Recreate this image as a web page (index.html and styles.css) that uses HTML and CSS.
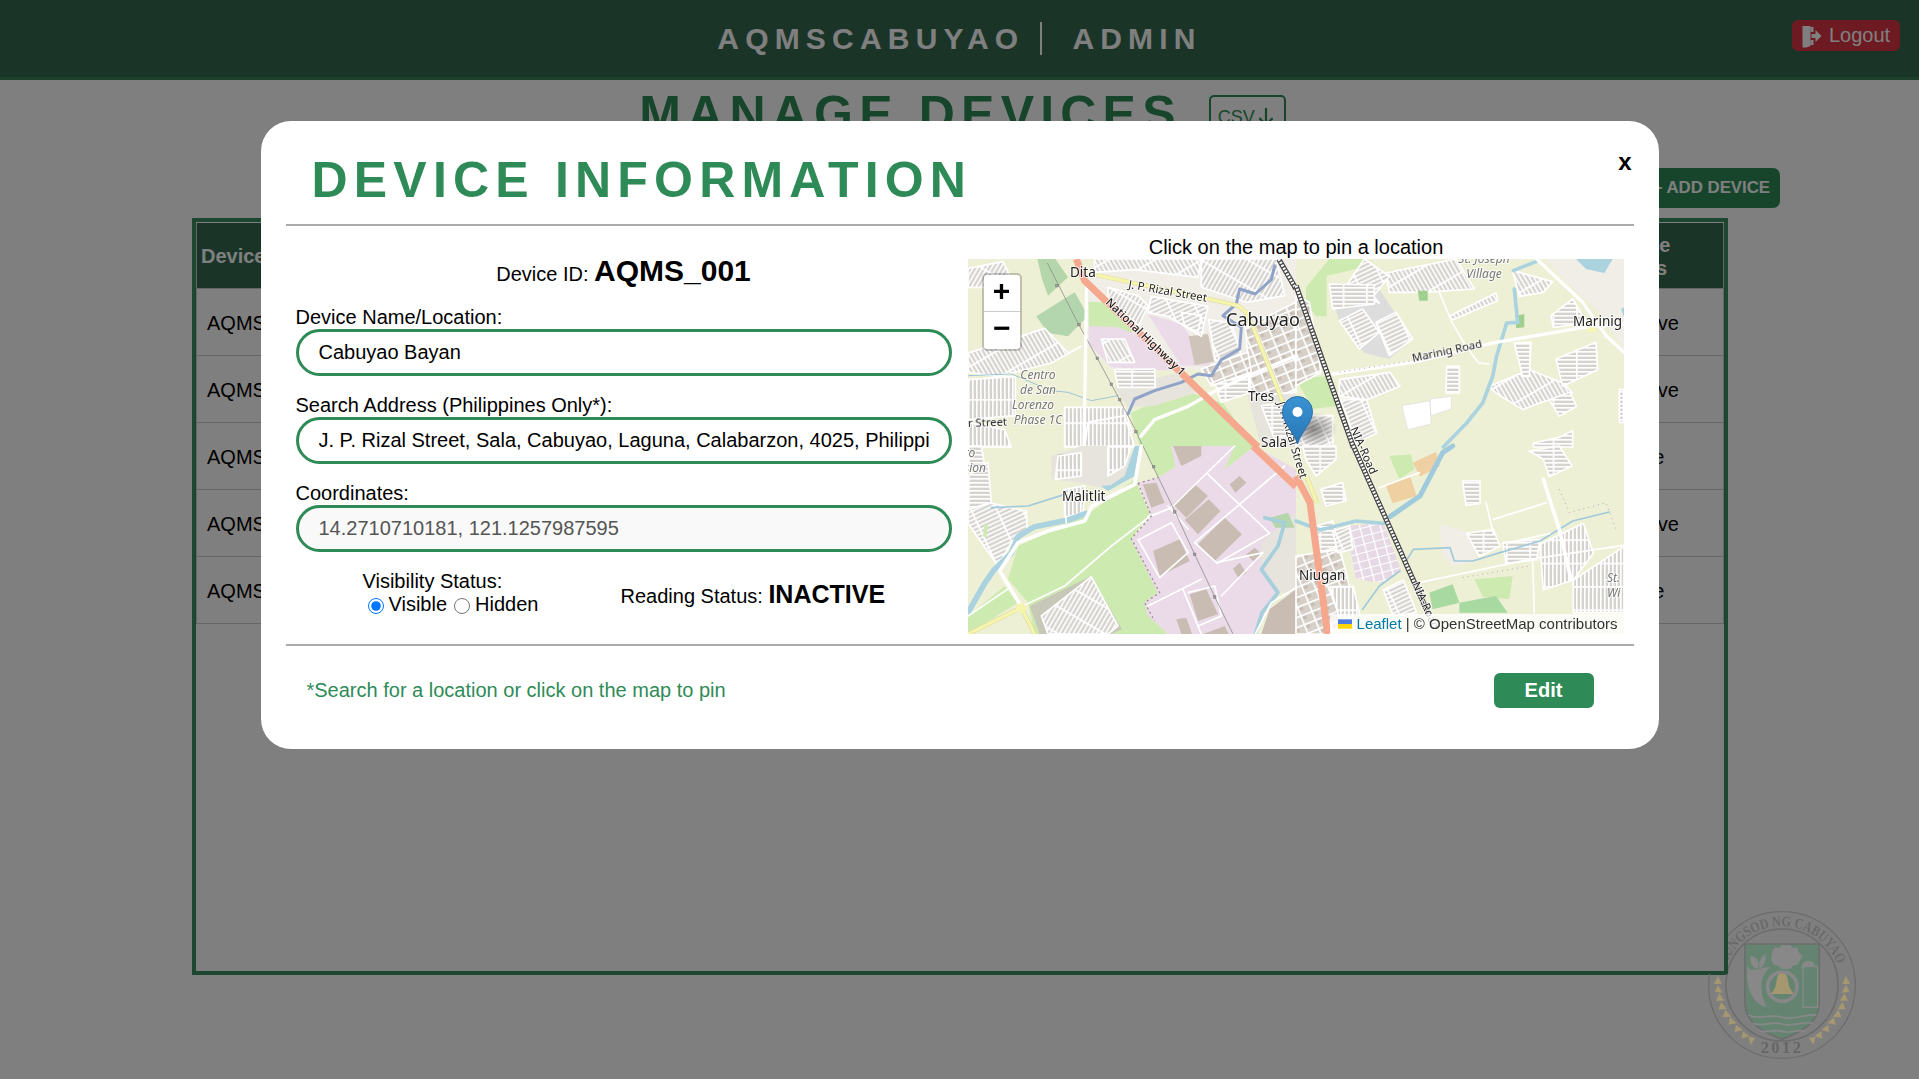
FILE: index.html
```html
<!DOCTYPE html>
<html lang="en">
<head>
<meta charset="utf-8">
<title>Manage Devices</title>
<link rel="stylesheet" href="styles.css">
</head>
<body>
<header class="topbar">
  <div class="brand"><span>AQMSCABUYAO</span><i class="brand-sep"></i><span>ADMIN</span></div>
  <button class="logout" type="button">
    <svg class="logout-icon" viewBox="0 0 20 24"><path d="M1 2h8v20l-4 1.500H1z"/><path d="M9 3h3v5h-3zM9 16h3v5h-3z"/><path d="M10 10h4V6l6 6-6 6v-4h-4z"/></svg>
    Logout
  </button>
</header>
<main class="page">
  <div class="title-row">
    <h1 class="page-title">MANAGE DEVICES</h1>
    <span class="csv">CSV<svg class="csv-icon" viewBox="0 0 16 18"><path d="M8 1v15M2 10l6 6 6-6"/></svg></span>
  </div>
  <div class="tool-row"><button class="add" type="button">+ ADD DEVICE</button></div>
  <section class="table-box">
    <div class="t-row t-head"><span>Device ID</span><span>Device Name</span><span>Location</span><span>Device Status</span></div>
    <div class="t-row"><span>AQMS_001</span><span>Cabuyao Bayan</span><span>Sala</span><span>Inactive</span></div>
    <div class="t-row"><span>AQMS_002</span><span>Marinig</span><span>Marinig</span><span>Inactive</span></div>
    <div class="t-row"><span>AQMS_003</span><span>Niugan</span><span>Niugan</span><span>Active</span></div>
    <div class="t-row"><span>AQMS_004</span><span>Malitlit</span><span>Malitlit</span><span>Inactive</span></div>
    <div class="t-row"><span>AQMS_005</span><span>Dita</span><span>Dita</span><span>Active</span></div>
  </section>
</main>

<div class="overlay">
  <div class="modal">
    <div class="modal-head">
      <h2 class="modal-title">DEVICE INFORMATION</h2>
      <span class="close">x</span>
    </div>
    <hr class="rule">
    <div class="modal-body">
      <form class="form-col">
        <div class="device-id">Device ID: <b>AQMS_001</b></div>
        <label class="field-label">Device Name/Location:</label>
        <input class="field" type="text" value="Cabuyao Bayan">
        <label class="field-label">Search Address (Philippines Only*):</label>
        <input class="field" type="text" value="J. P. Rizal Street, Sala, Cabuyao, Laguna, Calabarzon, 4025, Philippines">
        <label class="field-label">Coordinates:</label>
        <input class="field field-off" type="text" value="14.2710710181, 121.1257987595" disabled>
        <div class="status-row">
          <div class="visibility">
            <div>Visibility Status:</div>
            <div class="radios">
              <input class="radio" type="radio" name="v" checked><span>Visible</span>
              <input class="radio" type="radio" name="v"><span>Hidden</span>
            </div>
          </div>
          <div class="reading">Reading Status: <b>INACTIVE</b></div>
        </div>
      </form>
      <div class="map-col">
        <div class="map-caption">Click on the map to pin a location</div>
        <div class="map">
          <svg class="map-svg" viewBox="0 0 656 375" xmlns="http://www.w3.org/2000/svg">
            <defs>
              <pattern id="p0" width="70" height="12" patternUnits="userSpaceOnUse"><rect width="70" height="12" fill="#d6d3cf"/><rect width="70" height="5" fill="#fff"/><rect width="5" height="12" fill="#fff"/></pattern>
              <pattern id="p90" width="12" height="70" patternUnits="userSpaceOnUse"><rect width="12" height="70" fill="#d6d3cf"/><rect width="5" height="70" fill="#fff"/><rect width="12" height="5" fill="#fff"/></pattern>
              <pattern id="p30" width="12" height="70" patternUnits="userSpaceOnUse" patternTransform="rotate(30)"><rect width="12" height="70" fill="#d6d3cf"/><rect width="5" height="70" fill="#fff"/><rect width="12" height="5" fill="#fff"/></pattern>
              <pattern id="p150" width="12" height="70" patternUnits="userSpaceOnUse" patternTransform="rotate(-30)"><rect width="12" height="70" fill="#d6d3cf"/><rect width="5" height="70" fill="#fff"/><rect width="12" height="5" fill="#fff"/></pattern>
              <pattern id="p65" width="12" height="70" patternUnits="userSpaceOnUse" patternTransform="rotate(65)"><rect width="12" height="70" fill="#d6d3cf"/><rect width="5" height="70" fill="#fff"/><rect width="12" height="5" fill="#fff"/></pattern>
              <pattern id="grid" width="30" height="24" patternUnits="userSpaceOnUse" patternTransform="rotate(-15)"><rect width="30" height="24" fill="#e6d8e4"/><rect width="4" height="24" fill="#fff"/><rect width="30" height="3" fill="#fff"/></pattern>
              <pattern id="town" width="36" height="28" patternUnits="userSpaceOnUse" patternTransform="rotate(-22)"><rect width="36" height="28" fill="#d6d0c9"/><rect x="6" y="6" width="12" height="10" fill="#c7bdb3"/><rect width="5" height="28" fill="#fff"/><rect width="36" height="5" fill="#fff"/></pattern>
              <linearGradient id="pinfill" x1="0" y1="0" x2="0" y2="1"><stop offset="0" stop-color="#3b93d3"/><stop offset="1" stop-color="#2777b5"/></linearGradient>
              <radialGradient id="pinshadow"><stop offset="0" stop-color="#000" stop-opacity=".42"/><stop offset="1" stop-color="#000" stop-opacity="0"/></radialGradient>
            </defs>
            <rect class="m-land" width="656" height="375"/>
            <g class="m-geo">
              <!-- north-west quadrant, 3x units -->
              <g transform="scale(.33333)">
                <polygon class="m-tan" points="380,0 984,0 984,360 820,340 640,330 430,330 360,260 360,60"/>
                <polygon class="m-green2" points="208,0 262,0 300,55 240,110 222,60"/>
                <polygon class="m-green3" points="205,172 320,100 360,170 300,232 240,222"/>
                <polygon class="m-green" points="362,128 420,130 505,215 440,240 362,200"/>
                <polygon class="m-pink" points="362,200 450,205 520,235 640,320 620,335 430,325 362,255"/>
                <polygon class="m-pink" points="540,165 640,195 730,320 640,320"/>
                <polygon class="m-bldg" points="662,232 720,225 738,308 680,318"/>
                <polygon class="m-green" points="488,462 640,392 765,432 860,564 515,564"/>
                <polygon class="m-tan2" points="440,385 640,340 690,400 560,440 480,445"/>
                <polygon class="m-tan2" points="820,340 984,360 984,564 880,564"/>
                <g class="m-res" fill="url(#p30)">
                  <polygon points="0,28 105,8 130,60 40,85 0,85"/>
                  <polygon points="700,0 925,0 950,110 835,130 700,85"/>
                  <polygon points="420,85 510,110 540,140 512,200 420,120"/>
                </g>
                <g class="m-res" fill="url(#p150)">
                  <polygon points="380,0 700,0 690,55 500,32 380,40"/>
                  <polygon points="0,282 230,208 300,282 340,262 250,312 90,352 0,340"/>
                  <polygon points="400,240 470,240 500,310 420,310"/>
                </g>
                <g class="m-res" fill="url(#p65)">
                  <polygon points="550,112 720,142 700,232 600,172 540,160"/>
                  <polygon points="722,182 790,192 832,330 742,302"/>
                  <polygon points="640,160 700,170 690,220 650,200"/>
                </g>
                <g class="m-res" fill="url(#p90)">
                  <polygon points="0,362 142,352 142,470 0,482"/>
                  <polygon points="290,445 470,445 492,520 400,564 290,564"/>
                  <polygon points="0,490 110,512 130,564 0,564"/>
                  <polygon points="360,490 470,470 500,564 350,564"/>
                </g>
                <g class="m-res" fill="url(#p0)">
                  <polygon points="440,332 560,330 562,385 450,385"/>
                  <polygon points="740,370 840,350 850,400 760,430"/>
                  <polygon points="880,440 984,430 984,520 920,540"/>
                </g>
                <g class="m-res" fill="url(#town)"><polygon points="832,205 984,130 984,400 850,410"/><polygon points="700,330 840,280 850,340 730,380"/></g>
                <polyline class="m-river-thin" points="0,350 130,345 250,395 300,400 370,425 450,410"/>
                <polyline class="m-river" points="480,465 500,420 560,395 640,370 690,345 730,350 760,302 815,270 820,205 765,170 805,135 815,90 862,105 910,62 920,20"/>
                <polyline class="m-bound" points="238,12 332,196 388,298 455,422 505,518 525,564"/>
                <g class="m-node"><rect x="263" y="76" width="8" height="8"/><rect x="329" y="193" width="8" height="8"/><rect x="384" y="294" width="8" height="8"/><rect x="426" y="372" width="8" height="8"/><rect x="451" y="418" width="8" height="8"/><rect x="500" y="514" width="8" height="8"/></g>
                <polyline class="m-road-w" points="356,70 348,564"/>
                <polyline class="m-road-w" points="518,532 560,482 660,442 730,402 840,350 984,290"/>
                <polyline class="m-sec-c" points="385,48 700,115 810,140 835,160 862,220 945,430"/>
                <polyline class="m-sec" points="385,48 700,115 810,140 835,160 862,220 945,430"/>
                <polyline class="m-trunk" points="325,0 350,65 420,132 640,342 870,564"/>
                <polyline class="m-rail-o" points="932,0 984,90"/><polyline class="m-rail-i" points="932,0 984,90"/>
              </g>
              <!-- north-east quadrant -->
              <g transform="translate(328) scale(.33333)">
                <polygon class="m-tan" points="750,0 984,0 984,270 900,150 800,60"/>
                <polygon class="m-green" points="30,85 100,0 205,0 205,25 92,50 92,172 60,172 30,130"/>
                <polygon class="m-green" points="0,360 100,350 130,440 50,450"/>
                <polygon class="m-grey" points="98,72 240,76 350,240 280,300 205,282 130,190"/>
                <polygon class="m-water" points="840,0 950,0 925,42 870,30"/>
                <polygon class="m-water" points="975,150 984,145 984,175"/>
                <g class="m-res" fill="url(#town)"><polygon points="0,110 40,130 75,340 0,380"/></g>
                <g class="m-res" fill="url(#p150)">
                  <polygon points="280,100 270,42 480,0 535,90 380,100"/>
                  <polygon points="650,35 770,68 742,100 670,112"/>
                  <polygon points="460,172 600,102 605,125 470,182"/>
                  <polygon points="580,382 700,332 800,372 830,402 730,432 680,452 600,402"/>
                  <polygon points="130,362 282,340 312,382 212,422 130,412"/>
                </g>
                <g class="m-res" fill="url(#p65)">
                  <polygon points="205,0 280,52 232,112 250,132 150,82"/>
                  <polygon points="130,185 200,150 250,220 190,270"/>
                  <polygon points="240,190 300,160 350,240 280,290"/>
                  <polygon points="132,422 212,422 242,522 180,552 150,462"/>
                  <polygon points="0,470 110,470 110,564 0,564"/>
                </g>
                <g class="m-res" fill="url(#p0)">
                  <polygon points="100,75 235,78 235,135 110,150"/>
                  <polygon points="765,170 830,120 872,192 772,205"/>
                  <polygon points="655,252 705,250 700,352 680,352"/>
                  <polygon points="452,322 490,322 490,402 450,402"/>
                  <polygon points="780,300 900,250 905,332 800,382"/>
                  <polygon points="760,422 822,400 842,442 790,472"/>
                  <polygon points="712,552 790,535 830,515 830,564 712,564"/>
                  <polygon points="970,392 984,392 984,490 970,490"/>
                </g>
                <polygon class="m-white-s" points="318,440 402,425 405,495 335,512"/><polygon class="m-white-s" points="402,420 466,412 466,450 405,470"/>
                <polygon class="m-green3b" points="365,95 395,95 395,125 370,125"/><polygon class="m-green3b" points="660,170 685,165 685,205 660,208"/>
                <polyline class="m-water-l" points="652,35 720,8"/>
                <polyline class="m-water-l" points="655,90 665,190 632,192 602,290 590,352 560,432 512,492 442,564"/>
                <polyline class="m-road-w" points="110,345 350,310 600,250 860,206 984,195"/>
                <polyline class="m-road-w" points="722,0 860,130 930,230 984,280"/>
                <polyline class="m-road-t" points="430,100 468,190 510,262 548,312 580,315"/>
                <polyline class="m-dots" points="130,340 350,305"/>
                <polyline class="m-rail-o" points="0,80 172,564"/><polyline class="m-rail-i" points="0,80 172,564"/>
                <rect class="m-sec" x="875" y="205" width="26" height="14"/>
              </g>
              <!-- south-west quadrant -->
              <g transform="translate(0,187) scale(.33333)">
                <polygon class="m-green" points="120,400 150,300 260,250 380,190 500,100 545,200 490,280 570,440 530,470 560,520 600,564 200,564 180,470"/>
                <polygon class="m-green" points="0,510 110,420 150,470 0,564"/>
                <polygon class="m-green" points="525,0 620,0 622,62 570,95"/>
                <polygon class="m-grey2" points="185,480 370,390 462,550 430,564 215,564"/>
                <polygon class="m-pink" points="570,95 622,62 610,0 860,0 984,70 984,200 885,290 880,370 930,440 860,564 600,564 540,510 530,470 570,440 490,280 550,210 510,110"/>
                <polygon class="m-tan2" points="250,30 340,0 480,0 500,80 420,130 330,110 250,100"/>
                <polygon class="m-green" points="770,70 860,0 800,0"/>
                <polygon class="m-tan2" points="880,290 984,200 984,440 935,440 880,370"/>
                <polygon class="m-green2" points="905,215 960,200 980,245 922,245"/>
                <g class="m-bldg-g">
                  <polygon points="615,175 680,115 720,150 655,215"/>
                  <polygon points="650,222 722,160 757,195 690,265"/>
                  <polygon points="690,295 770,215 822,265 740,345"/>
                  <polygon points="555,315 635,280 665,345 575,390"/>
                  <polygon points="525,115 565,110 590,170 550,185"/>
                  <polygon points="665,445 715,430 750,505 690,525"/>
                  <polygon points="795,368 815,350 835,380 812,397"/>
                  <polygon points="835,325 860,305 882,325 860,350"/>
                  <polygon points="785,115 815,90 835,110 802,140"/>
                  <polygon points="625,520 655,515 672,564 640,564"/>
                  <polygon points="705,564 770,540 782,564"/>
                  <polygon points="615,0 700,0 700,30 640,60"/>
                  <polygon points="905,490 984,430 984,564 880,564"/>
                  <polygon points="270,25 330,25 335,70 265,95"/>
                </g>
                <g class="m-grid-l">
                  <polyline points="540,212 610,185 800,0"/>
                  <polyline points="680,290 950,60"/>
                  <polyline points="720,85 905,262 748,352 680,290"/>
                  <polyline points="600,180 660,250"/>
                  <polyline points="745,350 885,320 760,450"/>
                  <polyline points="515,280 610,230 660,320 575,395 510,280"/>
                  <polyline points="540,480 700,400"/>
                  <polyline points="645,430 700,564"/>
                  <polyline points="660,440 740,420 760,510 690,540"/>
                </g>
                <g class="m-res" fill="url(#p65)">
                  <polygon points="0,190 60,170 175,195 178,262 130,290 90,360 0,232"/>
                </g>
                <g class="m-res" fill="url(#p0)"><polygon points="60,50 0,90 0,190 70,170"/><polygon points="0,0 40,0 50,60 0,70"/></g>
                <g class="m-res" fill="url(#p90)">
                  <polygon points="270,30 340,20 340,90 262,100"/>
                  <polygon points="290,130 350,120 345,200 290,215"/>
                  <polygon points="420,0 490,0 470,60 420,90"/>
                </g>
                <g class="m-res" fill="url(#p30)"><polygon points="220,510 370,392 450,540 420,564 240,564"/></g>
                <polygon class="m-green" points="50,230 60,240 55,275 45,270"/>
                <polyline class="m-water-w" points="0,500 50,412 78,372 130,322 150,272 200,242 300,222 355,202"/>
                <polygon class="m-water" points="428,118 470,90 500,0 515,0 500,90 420,135 400,120"/>
                <polyline class="m-river-thin2" points="70,185 180,180 290,145"/>
                <polyline class="m-river-l" points="890,215 950,230 930,300 880,370 930,440 882,500 862,564"/>
                <polyline class="m-road-w2" points="95,375 150,290 240,255 350,225 372,180 430,150 500,115 520,0"/>
                <polyline class="m-road-w2" points="95,375 160,482"/>
                <polyline class="m-road-t" points="160,482 290,420 430,300 545,212 610,185"/>
                <polyline class="m-road-t" points="0,510 118,430"/>
                <polyline class="m-road-t" points="285,135 295,230"/>
                <polyline class="m-road-t" points="862,564 910,470 984,425"/>
                <polyline class="m-bound" points="525,0 620,195 680,325 740,452 795,564"/>
                <polyline class="m-pdash" points="510,112 570,95"/><polyline class="m-pdash" points="510,112 550,210 490,278 575,440 530,470 560,525"/>
                <g class="m-node"><rect x="553" y="58" width="8" height="8"/><rect x="616" y="194" width="8" height="8"/><rect x="676" y="321" width="8" height="8"/><rect x="736" y="449" width="8" height="8"/></g>
                <polyline class="m-sec-c" points="0,564 160,485 200,564"/>
                <polyline class="m-sec" points="0,564 160,485 200,564"/>
                <circle class="m-sec-dot" cx="160" cy="487" r="15"/>
                <polyline class="m-trunk" points="855,0 984,122"/>
              </g>
              <!-- south-east quadrant -->
              <g transform="translate(328,187) scale(.33333)">
                <polygon class="m-tan" points="430,235 530,262 542,345 470,362 440,330"/>
                <polygon class="m-green" points="280,30 345,25 355,70 310,100"/>
                <polygon class="m-orange" points="270,120 342,90 362,150 290,172"/>
                <polygon class="m-orange" points="350,50 420,18 432,60 372,92"/>
                <polygon class="m-green" points="535,400 650,390 640,460 560,452"/>
                <polygon class="m-green2b" points="400,440 470,415 490,470 410,490"/>
                <polygon class="m-green2b" points="490,470 600,450 635,500 490,500"/>
                <g fill="url(#grid)"><polygon points="150,240 262,230 315,372 262,412 180,400"/></g>
                <g class="m-res" fill="url(#town)"><polygon points="0,330 132,310 180,500 100,564 0,564"/></g>
                <g class="m-res" fill="url(#p0)">
                  <polygon points="500,105 552,105 552,172 510,178"/>
                  <polygon points="700,15 790,0 828,60 760,92 742,40"/>
                  <polygon points="512,262 592,250 612,300 550,332"/>
                  <polygon points="620,290 732,280 722,342 630,352"/>
                  <polygon points="20,0 120,0 120,40 60,90 30,40"/>
                  <polygon points="60,240 110,225 130,300 70,320"/>
                  <polygon points="75,130 140,110 150,165 90,180"/>
                </g>
                <g class="m-res" fill="url(#p90)">
                  <polygon points="732,295 862,232 892,322 832,402 742,432"/>
                  <polygon points="832,402 984,302 984,500 832,500"/>
                  <polygon points="102,422 172,422 192,510 132,522"/>
                </g>
                <g class="m-res" fill="url(#p65)">
                  <polygon points="262,432 322,402 362,500 292,510"/>
                  <polygon points="110,255 160,240 170,310 125,320"/>
                </g>
                <polyline class="m-water-l" points="0,225 72,252 180,225 262,232"/>
                <polyline class="m-water-l2" points="282,212 372,150 440,20 470,0"/>
                <polyline class="m-river-thin2" points="332,342 352,310 462,305 475,345 530,345 612,320 732,285 830,225 940,198"/>
                <polyline class="m-river-thin2" points="200,490 250,420 312,375"/>
                <polyline class="m-road-t" points="250,125 370,80"/>
                <polyline class="m-road-w2" points="742,100 790,250 825,400"/>
                <polyline class="m-road-t" points="370,410 700,340 984,298"/>
                <polyline class="m-road-t" points="640,290 762,262"/>
                <polyline class="m-road-t" points="592,220 752,170"/>
                <polyline class="m-road-t" points="570,170 592,262"/>
                <polyline class="m-road-t" points="710,350 715,500"/>
                <polyline class="m-dots" points="790,130 820,200 930,170 960,250"/>
                <polyline class="m-dots" points="500,395 700,360"/>
                <polyline class="m-sec-c" points="0,70 32,92 62,170"/>
                <polyline class="m-sec" points="0,70 32,92 62,170"/>
                <polyline class="m-trunk" points="0,90 42,170 95,564"/>
                <polyline class="m-rail-o" points="172,0 400,510"/><polyline class="m-rail-i" points="172,0 400,510"/>
              </g>
            </g>
            <g class="m-label">
              <text x="102" y="18" class="l-12">Dita</text>
              <text x="160" y="29" class="l-10" transform="rotate(10 160 29)">J. P. Rizal Street</text>
              <text x="137" y="44" class="l-10 l-dark" transform="rotate(44 137 44)">National Highway 1</text>
              <text x="258" y="67" class="l-16">Cabuyao</text>
              <text x="605" y="67" class="l-12">Marinig</text>
              <text x="445" y="103" class="l-10" transform="rotate(-12 445 103)">Marinig Road</text>
              <text x="280" y="142" class="l-12">Tres</text>
              <text x="293" y="188" class="l-12">Sala</text>
              <text x="94" y="242" class="l-12">Malitlit</text>
              <text x="331" y="321" class="l-12">Niugan</text>
              <text x="0" y="168" class="l-10" transform="rotate(-2 0 168)">r Street</text>
              <text x="382" y="170" class="l-10" transform="rotate(66 382 170)">NIA-Road</text>
              <text x="444" y="325" class="l-10" transform="rotate(66 444 325)">NIA-Road</text>
              <text x="309" y="144" class="l-10" transform="rotate(73 309 144)">J. P. Rizal Street</text>
              <g class="l-it">
                <text x="516" y="4" class="l-mid">St. Joseph</text>
                <text x="516" y="19" class="l-mid">Village</text>
                <text x="70" y="120" class="l-mid">Centro</text>
                <text x="70" y="135" class="l-mid">de San</text>
                <text x="65" y="150" class="l-mid">Lorenzo</text>
                <text x="70" y="165" class="l-mid">Phase 1C</text>
                <text x="-4" y="198">ro</text>
                <text x="-4" y="213">sion</text>
                <text x="639" y="323">St.</text>
                <text x="639" y="338">Wi</text>
              </g>
            </g>
            <ellipse cx="345" cy="170" rx="24" ry="17" fill="url(#pinshadow)"/>
            <path class="m-pin" fill="url(#pinfill)" d="M329.500 185C326 173 314.500 164 314.500 152.500A15 15 0 0 1 344.500 152.500C344.500 164 333 173 329.500 185Z"/>
            <circle class="m-pin-dot" cx="329.500" cy="153" r="5"/>
          </svg>
          <div class="zoom-box">
            <span class="zoom-btn zoom-top">+</span>
            <span class="zoom-btn">&#8722;</span>
          </div>
          <div class="attrib"><svg class="flag" viewBox="0 0 12 8"><rect width="12" height="4" fill="#4C7BE1"/><rect y="4" width="12" height="4" fill="#FFD500"/></svg> <a class="attrib-link">Leaflet</a> | &#169; OpenStreetMap contributors</div>
        </div>
      </div>
    </div>
    <hr class="rule">
    <div class="modal-foot">
      <span class="note">*Search for a location or click on the map to pin</span>
      <button class="edit" type="button">Edit</button>
    </div>
  </div>
</div>

<svg class="seal" viewBox="0 0 600 567" xmlns="http://www.w3.org/2000/svg">
  <defs>
    <clipPath id="sealclip"><polygon points="144,0 600,0 600,567 0,567 0,252 144,252"/></clipPath>
    <path id="sealarc" d="M139 224A178 178 0 0 1 477 238"/>
  </defs>
  <g clip-path="url(#sealclip)">
    <circle class="s-ring" cx="306" cy="285" r="220"/>
    <circle class="s-ring2" cx="306" cy="285" r="168"/>
    <text class="s-text"><textPath href="#sealarc" textLength="430" lengthAdjust="spacingAndGlyphs">LUNGSOD NG CABUYAO</textPath></text>
    <text class="s-year" x="306" y="489" text-anchor="middle">2012</text>
    <path class="s-shield" d="M195 162H418V340C418 405 350 430 306 448C262 430 195 405 195 340Z"/>
    <path class="s-light" d="M285 172l14 2 6-9h26l6 9 14-2 6 16 10 8-6 14-8 14-14 4-10 9h-24l-10-9-14-4-8-14 2-22z"/>
    <circle class="s-light" cx="385" cy="232" r="20"/>
    <rect class="s-box" x="369" y="230" width="44" height="122"/>
    <path class="s-light" d="M203 225C210 255 240 230 275 230 240 250 235 300 260 352 215 340 195 290 203 225Z"/>
    <path class="s-light" d="M212 198C235 200 240 220 232 238 215 232 208 215 212 198ZM255 192C262 210 250 232 238 236 236 218 240 204 255 192Z"/>
    <circle class="s-bellring" cx="307" cy="290" r="44"/>
    <path class="s-tan" d="M307 250C322 250 322 262 326 282 328 298 338 304 340 312H274C276 304 286 298 288 282 292 262 292 250 307 250Z"/>
    <path class="s-wave" d="M205 375C240 392 265 370 306 382 345 392 375 370 410 375"/>
    <path class="s-wave" d="M218 400C250 412 270 392 306 402 340 412 365 392 398 400"/>
    <path class="s-wave" d="M238 422C262 432 280 416 306 424 332 432 350 416 376 424"/>
    <g class="s-tan">
      <polygon points="114,258 125,282 102,282"/><polygon points="114,284 127,308 104,306"/><polygon points="118,310 133,332 108,332"/>
      <polygon points="124,336 140,358 115,358"/><polygon points="136,360 154,380 128,382"/><polygon points="150,382 170,400 145,404"/>
      <polygon points="168,404 188,420 164,426"/><polygon points="188,424 208,438 185,446"/><polygon points="205,440 225,444 212,465"/>
      <polygon points="498,258 510,282 487,282"/><polygon points="498,284 508,306 485,308"/><polygon points="494,310 504,332 479,332"/>
      <polygon points="488,336 497,358 472,358"/><polygon points="476,360 484,382 458,380"/><polygon points="462,382 467,404 442,400"/>
      <polygon points="444,404 448,426 424,420"/><polygon points="424,424 427,446 404,438"/><polygon points="407,440 400,465 387,444"/>
    </g>
  </g>
</svg>
</body>
</html>
```

FILE: styles.css
```css
* { box-sizing: border-box; }
html, body { margin: 0; height: 100%; }
body {
  font-family: "Liberation Sans", Arial, sans-serif;
  font-size: 20px;
  color: #000;
  background: #fff;
  overflow: hidden;
}

/* background page */
.topbar {
  height: 80px;
  background: #346a4f;
  border-bottom: 3px solid #3a8058;
  display: flex;
  align-items: center;
  justify-content: center;
  position: relative;
}
.brand {
  display: flex;
  align-items: center;
  color: #fff;
  font-weight: 700;
  font-size: 30px;
  letter-spacing: 6.200px;
}
.brand-sep {
  width: 2px;
  height: 33px;
  background: #fff;
  margin: 0 30px 0 16px;
}
.logout {
  position: absolute;
  top: 20px;
  right: 19px;
  width: 108px;
  height: 31px;
  background: #dc3545;
  border: 0;
  border-radius: 6px;
  color: #fff;
  font: 20px "Liberation Sans", Arial, sans-serif;
  display: flex;
  align-items: center;
  gap: 7px;
  padding: 0 0 0 9px;
}
.logout-icon { width: 21px; height: 24px; fill: #fff; }

.page { padding: 0 139px 0 192px; }
.title-row {
  height: 88px;
  display: flex;
  justify-content: center;
  align-items: flex-start;
  gap: 27px;
  padding: 5px 47px 0 0;
}
.page-title {
  margin: 0;
  font-size: 50px;
  line-height: 58px;
  letter-spacing: 6.200px;
  color: #2e8b57;
}
.csv {
  display: inline-flex;
  align-items: center;
  width: 77px;
  height: 44px;
  margin-top: 10px;
  border: 2px solid #2e8b57;
  border-radius: 5px;
  padding-left: 7px;
  color: #2e8b57;
  font-size: 18px;
}
.csv-icon { width: 18px; height: 20px; fill: none; stroke: #2e8b57; stroke-width: 2; margin-left: 2px; }
.tool-row { display: flex; justify-content: flex-end; height: 40px; }
.add {
  height: 40px;
  width: 150px;
  padding: 0 10px 0 0;
  text-align: right;
  border: 0;
  border-radius: 7px;
  background: #2e8b57;
  color: #fff;
  font: 700 16.800px "Liberation Sans", Arial, sans-serif;
}
.table-box {
  width: 1536px;
  height: 757px;
  margin-top: 10px;
  border: 4px solid #3a8f62;
  padding: 1px 0 0;
  box-shadow: inset 0 1px 0 #fff;
}
.t-row {
  display: grid;
  grid-template-columns: 480px 500px 423px 1fr;
  height: 67px;
  align-items: center;
  padding-left: 10px;
  border-bottom: 1px solid #ccc;
  border-right: 1px solid #ccc;
  border-left: 1px solid #ccc;
}
.t-row span { padding-top: 2px; }
.t-head {
  height: 66px;
  padding-left: 4px;
  grid-template-columns: 480px 500px 425px 1fr;
  background: #346a4f;
  color: #fff;
  font-weight: 700;
}
.t-head span:last-child { width: 80px; }

/* modal */
.overlay {
  position: fixed;
  inset: 0;
  background: rgba(0, 0, 0, .5);
  display: flex;
  justify-content: center;
  align-items: flex-start;
  padding-top: 121px;
}
.modal {
  width: 1398px;
  height: 628px;
  background: #fff;
  border-radius: 30px;
  padding: 0 25px;
}
.modal-head {
  height: 103px;
  display: flex;
  justify-content: space-between;
  align-items: flex-start;
  padding: 31px 2px 0 26px;
}
.modal-title {
  margin: 0;
  color: #2e8b57;
  font-size: 50px;
  line-height: 57px;
  letter-spacing: 6.200px;
}
.close {
  font-weight: 700;
  font-size: 24px;
  line-height: 24px;
  margin-top: -2px;
}
.rule {
  margin: 0;
  border: 0;
  border-top: 2px solid #aaa;
}
.modal-body {
  display: flex;
  height: 418px;
  padding: 0 10px;
  gap: 16px;
}
.form-col {
  width: 656px;
  display: flex;
  flex-direction: column;
}
.device-id {
  text-align: center;
  height: 80px;
  padding-top: 29px;
  line-height: 32px;
}
.device-id b { font-size: 30px; }
.field-label { display: block; height: 23px; line-height: 23px; margin-top: 18px; }
.device-id + .field-label { margin-top: 0; }
.field {
  width: 656px;
  height: 47px;
  flex: none;
  border: 3px solid #2e8b57;
  border-radius: 24px;
  padding: 0 20px;
  font: 20px "Liberation Sans", Arial, sans-serif;
  color: #000;
  background: #fff;
  outline: 0;
}
.field-off { background: #f9f9f9; color: #555; }
.status-row {
  display: flex;
  margin-top: 18px;
}
.visibility { width: 321px; padding-left: 67px; line-height: 23px; flex: none; }
.radios { display: flex; align-items: center; padding-left: 5px; }
.radio { margin: 3px 5px 0 0; width: 16px; height: 16px; }
.radios span + .radio { margin-left: 7px; }
.reading { padding: 0 0 0 4px; line-height: 48px; white-space: nowrap; }
.reading b { font-size: 25px; }
.map-col { width: 656px; display: flex; flex-direction: column; }
.map-caption { height: 33px; padding: 10px 0 0 1px; line-height: 23px; text-align: center; }
.map {
  position: relative;
  width: 656px;
  height: 375px;
  overflow: hidden;
}
.map-svg { display: block; width: 656px; height: 375px; }
.zoom-box {
  position: absolute;
  left: 14px;
  top: 14px;
  width: 40px;
  height: 78px;
  border: 2px solid rgba(0, 0, 0, .2);
  border-radius: 5px;
  background: #fff;
  background-clip: padding-box;
}
.zoom-btn {
  display: block;
  height: 37px;
  text-align: center;
  font: 700 30px/37px "Liberation Mono", monospace;
  color: #000;
}
.zoom-top { border-bottom: 1px solid #ccc; }
.attrib {
  position: absolute;
  right: 0;
  bottom: 0;
  height: 20px;
  padding: 0 6px 0 8px;
  background: rgba(255, 255, 255, .8);
  font-size: 15px;
  line-height: 20px;
  color: #333;
  white-space: nowrap;
}
.attrib-link { color: #0078a8; }
.flag { width: 14px; height: 10px; }

/* map layers */
.m-land { fill: #eef0d5; }
.m-geo { filter: blur(.35px); }
.m-res polygon { stroke: #fff; stroke-width: 5; stroke-linejoin: round; }
.m-tan { fill: #f1eee8; }
.m-tan2 { fill: #e6e4dc; }
.m-grey { fill: #dddddd; }
.m-grey2 { fill: #c8c8b8; }
.m-green { fill: #cdebb0; }
.m-green2 { fill: #b5d5aa; }
.m-green2b { fill: #a7d9a0; }
.m-green3 { fill: #b3d6ae; }
.m-green3b { fill: #9fd08f; }
.m-pink { fill: #ebdbe8; }
.m-orange { fill: #efd0a2; }
.m-bldg { fill: #cfc4ba; }
.m-bldg-g { fill: #c9bdb3; }
.m-water { fill: #aad3df; }
.m-water-l, .m-water-l2, .m-water-w, .m-river, .m-river-l, .m-river-thin, .m-river-thin2 { fill: none; stroke-linejoin: round; stroke-linecap: round; }
.m-water-l { stroke: #aad3df; stroke-width: 11; }
.m-water-l2 { stroke: #9fcbdc; stroke-width: 15; }
.m-water-w { stroke: #aad3df; stroke-width: 17; }
.m-river { stroke: #8fa2c8; stroke-width: 9; }
.m-river-l { stroke: #a6cfdc; stroke-width: 11; }
.m-river-thin { stroke: #9fc4d6; stroke-width: 3; }
.m-river-thin2 { stroke: #a0cadb; stroke-width: 5; }
.m-bound { fill: none; stroke: #8f8f8f; stroke-width: 2.500; }
.m-node { fill: #9a9a9a; stroke: #666; stroke-width: 1; }
.m-pdash { fill: none; stroke: #a28aa0; stroke-width: 4; stroke-dasharray: 6 9; }
.m-dots { fill: none; stroke: #c09cc0; stroke-width: 3; stroke-dasharray: 3 12; }
.m-road-w, .m-road-w2, .m-road-t, .m-grid-l polyline { fill: none; stroke: #fff; stroke-linejoin: round; stroke-linecap: round; }
.m-road-w { stroke-width: 10; }
.m-road-w2 { stroke-width: 11; }
.m-road-t { stroke-width: 5; }
.m-grid-l polyline { stroke-width: 5; }
.m-white-s { fill: #fff; stroke: #ddd; stroke-width: 2; }
.m-sec { fill: #f6f6b4; }
polyline.m-sec { fill: none; stroke: #f5f5ae; stroke-width: 10; stroke-linejoin: round; }
.m-sec-c { fill: none; stroke: #d6d49a; stroke-width: 13; stroke-linejoin: round; }
.m-sec-dot { fill: #f5f5ae; }
.m-trunk { fill: none; stroke: #f6a88e; stroke-width: 21; stroke-linejoin: round; }
.m-rail-o { fill: none; stroke: #444; stroke-width: 16; }
.m-rail-i { fill: none; stroke: #fff; stroke-width: 9; stroke-dasharray: 6 4; }
.m-label text {
  font-family: "Noto Sans", sans-serif;
  fill: #222;
  stroke: rgba(255, 255, 255, .75);
  stroke-width: 2px;
  paint-order: stroke;
}
.l-16 { font-size: 18px; }
.l-12 { font-size: 13.500px; }
.l-10 { font-size: 11.300px; }
.l-dark { font-weight: 500; }
.m-label .l-it text { font-style: italic; font-size: 12px; fill: #777; }
.m-label .l-mid { text-anchor: middle; }
.m-pin { stroke: #2a6ea6; stroke-width: 1; }
.m-pin-dot { fill: #fff; }

.modal-foot {
  display: flex;
  justify-content: space-between;
  align-items: center;
  height: 79px;
  padding: 10px 40px 0 21px;
}
.note { color: #2e8b57; }
.edit {
  width: 100px;
  height: 35px;
  border: 0;
  border-radius: 6px;
  background: #2e8b57;
  color: #fff;
  font: 700 20px "Liberation Sans", Arial, sans-serif;
}

/* seal sits above the dimmed page as a faint watermark */
.seal {
  position: fixed;
  left: 1680px;
  top: 890px;
  width: 200px;
  height: 189px;
}
.s-ring { fill: none; stroke: #6d6d6d; stroke-width: 4; }
.s-ring2 { fill: none; stroke: #6d6d6d; stroke-width: 5; }
.s-text { font: 700 44px "Liberation Serif", serif; fill: #6a6a6a; }
.s-year { font: 700 50px "Liberation Serif", serif; fill: #666; letter-spacing: 7px; }
.s-shield { fill: #648471; stroke: #6d6d6d; stroke-width: 5; }
.s-light { fill: #888; }
.s-box { fill: #648471; stroke: #888; stroke-width: 4; }
.s-bellring { fill: #648471; stroke: #888; stroke-width: 11; }
.s-tan { fill: #a5976f; }
.s-wave { fill: none; stroke: #888; stroke-width: 5; }
```
